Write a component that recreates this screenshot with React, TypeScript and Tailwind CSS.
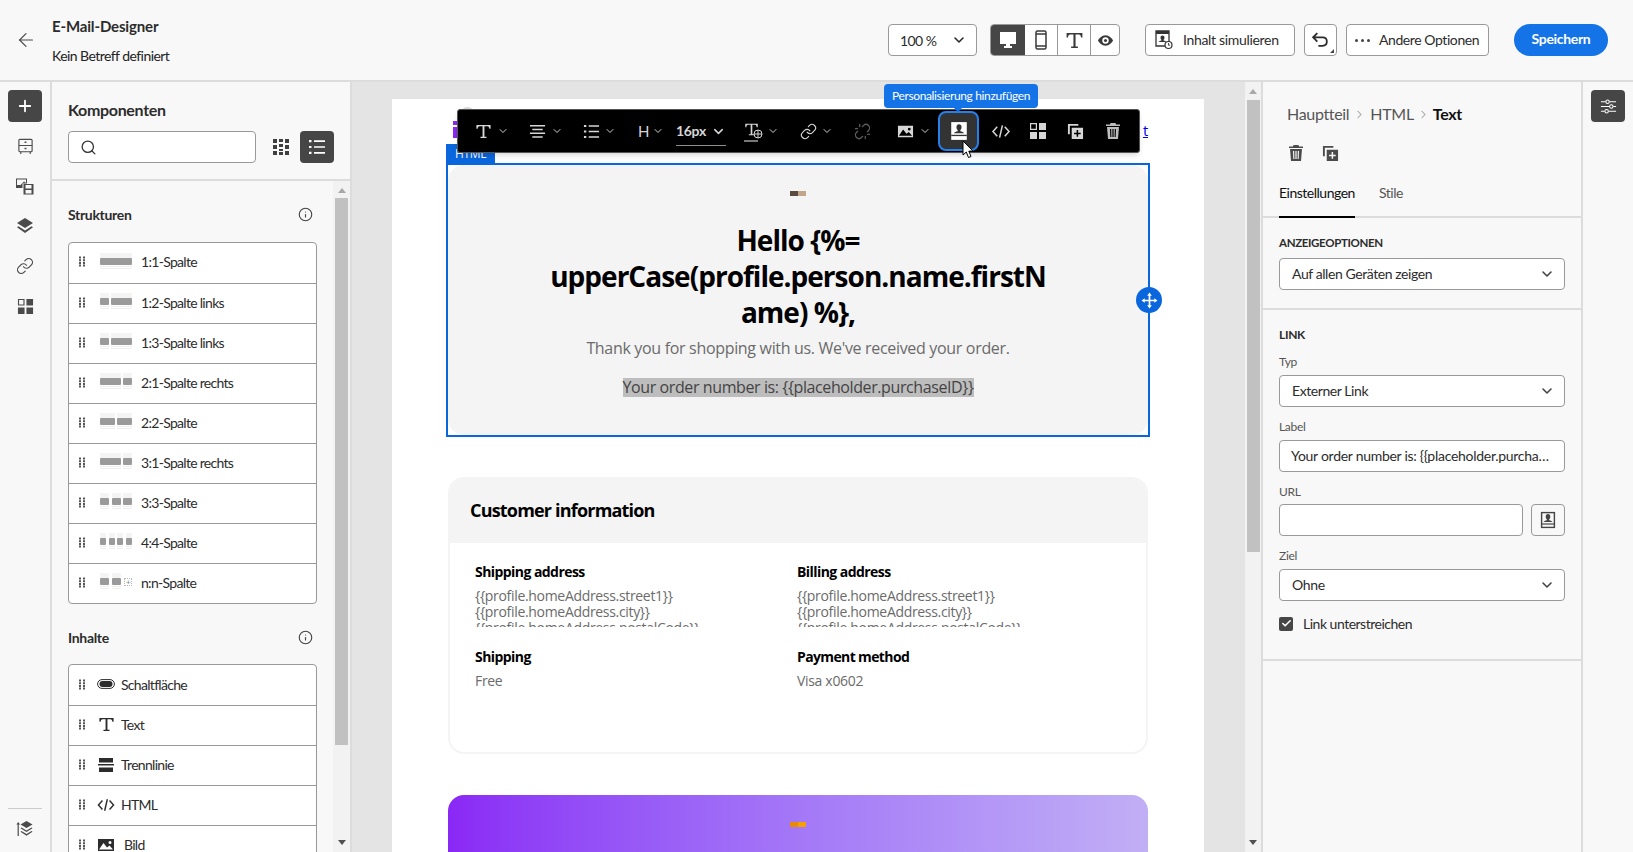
import React from 'react';
import { ArrowLeft, ChevronDown, ChevronRight, Info, Link as LinkIcon, Plus, Search, Unlink, Check } from 'lucide-react';

type IconProps = { className?: string };

const TextIcon = ({ className }: IconProps) => (
  <svg viewBox="0 0 18 18" fill="currentColor" className={className}>
    <path d="M1.500 2h15v4.200h-1.300c-.2-1.700-.8-2.800-2-2.800H10v11.200h2.200V16H5.800v-1.400H8V3.400H4.800c-1.200 0-1.800 1.100-2 2.800H1.500z" />
  </svg>
);

const AlignIcon = ({ className }: IconProps) => (
  <svg viewBox="0 0 18 18" fill="currentColor" className={className}>
    <path d="M1 2h16v1.600H1zM3.500 6h11v1.600h-11zM1 10h16v1.600H1zM3.500 14h11v1.600h-11z" />
  </svg>
);

const ListIcon = ({ className }: IconProps) => (
  <svg viewBox="0 0 18 18" fill="currentColor" className={className}>
    <path d="M1 2h2.500v2.200H1zM6 2.300h11v1.600H6zM1 7.900h2.500v2.200H1zM6 8.200h11v1.600H6zM1 13.800h2.500V16H1zM6 14.100h11v1.600H6z" />
  </svg>
);

const GridDotsIcon = ({ className }: IconProps) => (
  <svg viewBox="0 0 16 16" fill="currentColor" className={className}>
    <path d="M0 0h4v4H0zM6 0h4v3H6zM12 0h4v4h-4zM0 6h4v4H0zM6 5h4v3H6zM12 6h4v4h-4zM0 12h4v4H0zM6 10h4v2H6zM6 13h4v3H6zM12 12h4v4h-4z" />
  </svg>
);

const TilesIcon = ({ className }: IconProps) => (
  <svg viewBox="0 0 18 18" fill="currentColor" className={className}>
    <path d="M1 1h7v7H1zM2.200 2.200v4.600h4.600V2.200z" fillRule="evenodd" />
    <path d="M10 1h7v7h-7zM1 10h7v7H1zM10 10h7v7h-7z" />
  </svg>
);

const DuplicateIcon = ({ className }: IconProps) => (
  <svg viewBox="0 0 18 18" fill="currentColor" className={className}>
    <path d="M1 1h11v2H3v9H1z" />
    <path d="M5 5h12v12H5zM10.200 7.500v2.700H7.500v1.600h2.700v2.700h1.600v-2.700h2.700v-1.600h-2.700V7.500z" fillRule="evenodd" />
  </svg>
);

const TrashIcon = ({ className }: IconProps) => (
  <svg viewBox="0 0 18 18" fill="currentColor" className={className}>
    <path d="M6.500 1h5l.5 1.500h4V4H2V2.500h4zM3 5h12l-1 12H4zM6 7l.3 8h1.100l-.2-8zM8.400 7v8h1.200V7zM10.800 7l-.2 8h1.100l.3-8z" fillRule="evenodd" />
  </svg>
);

const ImageIcon = ({ className }: IconProps) => (
  <svg viewBox="0 0 18 18" fill="currentColor" className={className}>
    <path d="M1 3h16v12H1zM2 13.500h14l-3.500-4-2.500 2-3.500-4.500zM13 5a1.500 1.500 0 100 3 1.500 1.500 0 000-3z" fillRule="evenodd" />
  </svg>
);

const PersonIcon = ({ className, filled }: IconProps & { filled?: boolean }) => (
  <svg viewBox="0 0 18 18" className={className}>
    {filled ? (
      <rect x="2" y="1" width="14" height="16" fill="currentColor" />
    ) : (
      <rect x="2.600" y="1.600" width="12.800" height="14.800" fill="none" stroke="currentColor" strokeWidth="1.400" />
    )}
    <g fill={filled ? '#333' : 'currentColor'}>
      <path d="M9 3c1.500 0 2.300 1.100 2.300 2.700 0 1.100-.4 2-1.100 2.500v1c1.500.4 3 .9 3.300 1.800H4.500c.3-.9 1.800-1.400 3.300-1.800v-1c-.7-.5-1.100-1.400-1.100-2.500C6.700 4.100 7.500 3 9 3z" />
      <path d="M2 12.400h14v1.200H2z" />
    </g>
  </svg>
);

const CodeIcon = ({ className }: IconProps) => (
  <svg viewBox="0 0 20 18" fill="none" stroke="currentColor" strokeWidth="1.600" className={className}>
    <path d="M6 4L1.500 9 6 14M14 4l4.500 5-4.500 5M11.500 2.500l-3 13" />
  </svg>
);

const DragHandle = () => (
  <svg viewBox="0 0 6 10" fill="#555" className="h-[11px] w-[6px] shrink-0">
    <path d="M0 0h2v2H0zM4 0h2v2H4zM0 2.700h2v2H0zM4 2.700h2v2H4zM0 5.400h2v2H0zM4 5.400h2v2H4zM0 8h2v2H0zM4 8h2v2H4z" />
  </svg>
);

// column widths of the little layout previews
const structures: { label: string; cols: number[]; more?: boolean }[] = [
  { label: '1:1-Spalte', cols: [32] },
  { label: '1:2-Spalte links', cols: [9, 21] },
  { label: '1:3-Spalte links', cols: [9, 21] },
  { label: '2:1-Spalte rechts', cols: [21, 9] },
  { label: '2:2-Spalte', cols: [15, 15] },
  { label: '3:1-Spalte rechts', cols: [21, 9] },
  { label: '3:3-Spalte', cols: [9, 9, 9] },
  { label: '4:4-Spalte', cols: [6, 6, 6, 6] },
  { label: 'n:n-Spalte', cols: [9, 9], more: true },
];

function StructureThumb({ cols, more }: { cols: number[]; more?: boolean }) {
  return (
    <div className="flex h-[18px] w-[32px] shrink-0 justify-between gap-[2px]">
      {cols.map((w, i) => (
        <div key={i} className="flex flex-col" style={{ width: w }}>
          <div className="h-[5px] bg-[#f4f4f4]" />
          <div className="h-[7px] rounded-[1px] bg-[#9a9a9a]" />
          <div className="mt-[1px] h-[1px] bg-[#eeeeee]" />
          <div className="mt-[1px] h-[1px] bg-[#eeeeee]" />
        </div>
      ))}
      {more && (
        <div className="mt-[5px] flex h-[8px] w-[8px] items-center justify-center border border-dotted border-[#bbbbbb] text-[8px] leading-none text-[#888888]">
          +
        </div>
      )}
    </div>
  );
}

const contents: { label: string; icon: React.ReactNode; gap: string }[] = [
  {
    label: 'Schaltfläche',
    gap: 'ml-[6px]',
    icon: (
      <svg viewBox="0 0 18 10" className="h-[10px] w-[18px]">
        <rect x=".6" y=".6" width="16.800" height="8.800" rx="4.400" fill="none" stroke="#2c2c2c" strokeWidth="1" />
        <rect x="2.500" y="2" width="13" height="6" rx="3" fill="#2c2c2c" />
      </svg>
    ),
  },
  { label: 'Text', gap: 'ml-[6px]', icon: <TextIcon className="h-[17px] w-[17px] text-[#2c2c2c]" /> },
  {
    label: 'Trennlinie',
    gap: 'ml-[6px]',
    icon: (
      <svg viewBox="0 0 16 14" fill="#2c2c2c" className="h-[14px] w-[16px]">
        <path d="M1 0h14v4.500H1zM0 6h16v1.600H0zM1 9.500h14V14H1z" />
      </svg>
    ),
  },
  { label: 'HTML', gap: 'ml-[6px]', icon: <CodeIcon className="h-[16px] w-[18px] text-[#2c2c2c]" /> },
  { label: 'Bild', gap: 'ml-[9px]', icon: <ImageIcon className="h-[18px] w-[18px] text-[#2c2c2c]" /> },
];

function Header() {
  return (
    <header className="flex h-[82px] shrink-0 items-center border-b-2 border-[#dcdcdc] bg-[#f8f8f8] pr-[25px]">
      <ArrowLeft className="ml-[15px] h-[22px] w-[22px] text-[#4b4b4b]" strokeWidth={1.300} />
      <div className="ml-[15px] flex flex-col pt-[2px]">
        <span className="text-[15px] leading-[20px] font-bold tracking-[-0.01em] text-[#2c2c2c]">E-Mail-Designer</span>
        <span className="mt-[10px] text-[14px] leading-[20px] tracking-[-0.04em] text-[#222222]">Kein Betreff definiert</span>
      </div>

      <div className="ml-auto flex h-[32px] w-[89px] items-center justify-between rounded-[4px] border border-[#999999] bg-white pr-[9px] pl-[11px] text-[14px] tracking-[-0.04em] text-[#2c2c2c]">
        100 %
        <ChevronDown className="h-[16px] w-[16px]" strokeWidth={2.400} />
      </div>

      <div className="ml-[13px] flex h-[32px] w-[130px] rounded-[4px] border border-[#999999] bg-white text-[#3a3a3a]">
        <div className="flex w-[34px] items-center justify-center rounded-l-[3px] bg-[#464646] text-white">
          <svg viewBox="0 0 18 18" fill="currentColor" className="h-[18px] w-[18px]">
            <path d="M1 1h16v12h-6v2h2v2H5v-2h2v-2H1z" />
          </svg>
        </div>
        <div className="flex w-[33px] items-center justify-center border-r border-[#999999]">
          <svg viewBox="0 0 12 20" fill="none" stroke="currentColor" strokeWidth="1.500" className="h-[20px] w-[12px]">
            <rect x="1" y="1" width="10" height="18" rx="1.500" />
            <path d="M1 4h10M1 16h10" />
          </svg>
        </div>
        <div className="flex w-[33px] items-center justify-center border-r border-[#999999]">
          <TextIcon className="h-[19px] w-[19px]" />
        </div>
        <div className="flex flex-1 items-center justify-center">
          <svg viewBox="0 0 18 18" className="h-[17px] w-[17px]">
            <path d="M9 3.500c4 0 7 3.500 8 5.500-1 2-4 5.500-8 5.500S2 11 1 9c1-2 4-5.500 8-5.500z" fill="currentColor" />
            <circle cx="9" cy="9" r="3.400" fill="white" />
            <circle cx="9" cy="9" r="1.600" fill="currentColor" />
          </svg>
        </div>
      </div>

      <div className="ml-[25px] flex h-[32px] w-[150px] items-center rounded-[4px] border border-[#999999] bg-white pl-[9px] text-[14px] text-[#2c2c2c]">
        <svg viewBox="0 0 18 20" className="h-[20px] w-[18px] text-[#333333]">
          <path d="M1 1h13v15H1z" fill="none" stroke="currentColor" strokeWidth="1.300" />
          <path d="M1 1h13v3H1z" fill="currentColor" />
          <path d="M7.500 5.500c1.200 0 2 .9 2 2.200 0 .9-.3 1.600-.9 2v.9c1.200.3 2.400.7 2.700 1.400H3.700c.3-.7 1.500-1.100 2.700-1.400v-.9c-.6-.4-.9-1.100-.9-2 0-1.300.8-2.200 2-2.200z" fill="currentColor" />
          <circle cx="13.500" cy="15" r="3.500" fill="white" stroke="currentColor" strokeWidth="1.200" />
          <path d="M13.500 13v2.200h1.600" fill="none" stroke="currentColor" strokeWidth=".9" />
        </svg>
        <span className="ml-[10px] pb-[1px]">Inhalt simulieren</span>
      </div>
      <div className="relative ml-[9px] flex h-[32px] w-[33px] items-center justify-center rounded-[4px] border border-[#999999] bg-white text-[#2c2c2c]">
        <svg viewBox="0 0 18 18" fill="none" stroke="currentColor" strokeWidth="1.700" className="h-[19px] w-[19px]">
          <path d="M6 2L2 6l4 4M2.500 6H11c2.500 0 4 1.700 4 4s-1.500 4-4 4H7" />
        </svg>
        <svg viewBox="0 0 4 4" fill="#444" className="absolute right-[2px] bottom-[2px] h-[4px] w-[4px]">
          <path d="M4 0v4H0z" />
        </svg>
      </div>
      <div className="ml-[9px] flex h-[32px] w-[143px] items-center rounded-[4px] border border-[#999999] bg-white pl-[8px] text-[14px] tracking-[-0.03em] text-[#2c2c2c]">
        <span className="flex gap-[3px]">
          <i className="h-[3px] w-[3px] rounded-full bg-[#444444]" />
          <i className="h-[3px] w-[3px] rounded-full bg-[#444444]" />
          <i className="h-[3px] w-[3px] rounded-full bg-[#444444]" />
        </span>
        <span className="ml-[9px] pb-[1px]">Andere Optionen</span>
      </div>
      <button className="ml-[25px] h-[32px] w-[94px] rounded-[16px] bg-[#1473e6] pb-[3px] text-[14px] font-bold text-white">Speichern</button>
    </header>
  );
}

function LeftRail() {
  return (
    <aside className="flex w-[52px] shrink-0 flex-col items-center border-r-2 border-[#dcdcdc] bg-[#f8f8f8] pt-[8px]">
      <div className="flex h-[32px] w-[34px] items-center justify-center rounded-[4px] bg-[#464646] text-white">
        <Plus className="h-[18px] w-[18px]" strokeWidth={2.400} />
      </div>
      <div className="mt-[4px] flex flex-col items-center text-[#4b4b4b]">
        <div className="flex h-[40px] items-center">
          <svg viewBox="0 0 18 18" fill="none" stroke="currentColor" strokeWidth="1.200" className="h-[17px] w-[17px]">
            <rect x="2" y="1.500" width="14" height="13" rx="1" />
            <path d="M2 8h14M4 14.500V17M14 14.500V17" />
            <path d="M8 4.500h2M8 11h2" strokeWidth="1.600" />
          </svg>
        </div>
        <div className="flex h-[40px] items-center">
          <svg viewBox="0 0 18 18" className="h-[18px] w-[18px]">
            <path d="M0 1.500h11V11H0z" fill="currentColor" />
            <path d="M1 2.500h9v3.500L8 4.500 4.500 8 1 8z" fill="#f8f8f8" />
            <path d="M6.500 6.500H18V18H6.500z" fill="#f8f8f8" />
            <path d="M7.500 7h10v10.500h-10z" fill="currentColor" />
            <path d="M9.500 8h6v3.500h-6zM9.500 13h6v3.500h-6z" fill="#f8f8f8" />
          </svg>
        </div>
        <div className="flex h-[40px] items-center">
          <svg viewBox="0 0 18 18" fill="currentColor" className="h-[18px] w-[18px]">
            <path d="M9 1l8 5-8 5-8-5zM2.500 9.300L9 13.400l6.500-4.100L17 10.300l-8 5.700-8-5.700z" />
          </svg>
        </div>
        <div className="flex h-[40px] items-center">
          <LinkIcon className="h-[18px] w-[18px]" strokeWidth={1.600} />
        </div>
        <div className="flex h-[40px] items-center">
          <TilesIcon className="h-[17px] w-[17px]" />
        </div>
      </div>
      <div className="mt-auto mb-[14px] flex w-[34px] flex-col items-center border-t border-[#cccccc] pt-[11px] text-[#4b4b4b]">
        <svg viewBox="0 0 18 18" fill="currentColor" className="h-[18px] w-[18px]">
          <path d="M2.200 2L4 4.500H2.800V16H1.600V4.500H.4zM10.500 1l6 3.500-6 3.500-6-3.500z" />
          <path d="M5.500 7.500l5 3 5-3 1 .7-6 3.800-6-3.800zM5.500 11l5 3 5-3 1 .7-6 4-6-4z" />
        </svg>
      </div>
    </aside>
  );
}

function ComponentsPanel() {
  return (
    <aside className="flex w-[300px] shrink-0 flex-col border-r-2 border-[#dcdcdc] bg-[#f8f8f8]">
      <div className="h-[99px] shrink-0 border-b-2 border-[#dcdcdc] px-[16px] pt-[17px]">
        <h2 className="text-[16px] leading-[22px] font-bold text-[#2c2c2c]">Komponenten</h2>
        <div className="mt-[10px] flex items-center">
          <div className="flex h-[32px] w-[188px] items-center rounded-[4px] border border-[#999999] bg-white pl-[11px]">
            <Search className="h-[17px] w-[17px] text-[#333333]" strokeWidth={1.800} />
          </div>
          <GridDotsIcon className="ml-[17px] h-[16px] w-[16px] text-[#3f3f3f]" />
          <div className="ml-[11px] flex h-[32px] w-[34px] items-center justify-center rounded-[4px] bg-[#464646] text-white">
            <ListIcon className="h-[18px] w-[18px]" />
          </div>
        </div>
      </div>

      <div className="flex min-h-0 flex-1">
        <div className="w-[281px] shrink-0 overflow-hidden pl-[16px]">
          <div className="mt-[23px] flex h-[20px] w-[249px] items-center justify-between text-[14px] font-bold text-[#2c2c2c]">
            Strukturen
            <Info className="mr-[4px] h-[15px] w-[15px] text-[#444444]" strokeWidth={1.800} />
          </div>
          <div className="mt-[18px] w-[249px] rounded-[4px] border border-[#999999] bg-white">
            {structures.map((s, i) => (
              <div key={s.label} className={`flex h-[40px] items-center pb-[3px] pl-[10px] text-[14px] tracking-[-0.05em] text-[#2c2c2c] ${i ? 'border-t border-[#999999]' : ''}`}>
                <DragHandle />
                <div className="ml-[15px]">
                  <StructureThumb cols={s.cols} more={s.more} />
                </div>
                <span className="ml-[9px]">{s.label}</span>
              </div>
            ))}
          </div>
          <div className="mt-[23px] flex h-[20px] w-[249px] items-center justify-between text-[14px] font-bold text-[#2c2c2c]">
            Inhalte
            <Info className="mr-[4px] h-[15px] w-[15px] text-[#444444]" strokeWidth={1.800} />
          </div>
          <div className="mt-[17px] w-[249px] rounded-t-[4px] border border-[#999999] bg-white">
            {contents.map((c, i) => (
              <div key={c.label} className={`flex h-[40px] items-center pb-[2px] pl-[10px] text-[14px] tracking-[-0.05em] text-[#2c2c2c] ${i ? 'border-t border-[#999999]' : ''}`}>
                <DragHandle />
                <div className="ml-[12px] flex w-[18px] justify-center">{c.icon}</div>
                <span className={c.gap}>{c.label}</span>
              </div>
            ))}
          </div>
        </div>
        <Scrollbar thumb="mt-[5px] h-[547px]" width="w-[17px]" />
      </div>
    </aside>
  );
}

function Scrollbar({ thumb, width }: { thumb: string; width: string }) {
  return (
    <div className={`flex shrink-0 flex-col items-center bg-[#f2f2f2] ${width}`}>
      <div className="mt-[7px] h-0 w-0 border-x-[4px] border-b-[5px] border-x-transparent border-b-[#a8a8a8]" />
      <div className={`w-[13px] bg-[#c1c1c1] ${thumb}`} />
      <div className="mt-auto mb-[7px] h-0 w-0 border-x-[4px] border-t-[5px] border-x-transparent border-t-[#505050]" />
    </div>
  );
}

const ToolChevron = ({ className }: IconProps) => (
  <ChevronDown className={`h-[12px] w-[12px] text-[#d0d0d0] ${className ?? ''}`} strokeWidth={2} />
);

function Toolbar() {
  return (
    <div className="absolute top-[27px] left-[105px] z-20 flex h-[44px] w-[683px] items-center rounded-[3px] border border-[#555555] bg-black pl-[17px] text-[#d6d6d6] shadow-md">
      <TextIcon className="h-[17px] w-[17px]" />
      <ToolChevron className="ml-[5px]" />
      <AlignIcon className="ml-[20px] h-[17px] w-[17px]" />
      <ToolChevron className="ml-[5px]" />
      <ListIcon className="ml-[20px] h-[17px] w-[17px]" />
      <ToolChevron className="ml-[4px]" />
      <span className="ml-[22px] w-[11px] text-[15px] leading-none">H</span>
      <ToolChevron className="ml-[3px]" />
      <div className="relative ml-[12px] flex w-[50px] items-center justify-between">
        <span className="text-[14px] leading-none font-bold">16px</span>
        <ChevronDown className="h-[15px] w-[15px]" strokeWidth={2.400} />
        <span className="absolute top-[21px] h-[1px] w-full bg-[#8f8f8f]" />
      </div>
      <div className="relative ml-[18px] h-[18px] w-[18px]">
        <TextIcon className="h-[15px] w-[15px]" />
        <svg viewBox="0 0 10 10" fill="none" stroke="currentColor" strokeWidth="1" className="absolute -right-[1px] bottom-[1px] h-[10px] w-[10px]">
          <circle cx="5" cy="5" r="4" fill="#000" />
          <path d="M1 5h8M5 1v8" />
        </svg>
        <span className="absolute -bottom-[2px] left-0 h-[2px] w-[14px] bg-[#777777]" />
      </div>
      <ToolChevron className="ml-[5px]" />
      <LinkIcon className="ml-[21px] h-[17px] w-[17px]" strokeWidth={1.600} />
      <ToolChevron className="ml-[4px]" />
      <Unlink className="ml-[21px] h-[17px] w-[17px] text-[#5c5c5c]" strokeWidth={1.800} />
      <ImageIcon className="ml-[26px] h-[17px] w-[17px]" />
      <ToolChevron className="ml-[5px]" />
      <div className="ml-[7px] flex h-[40px] w-[41px] items-center justify-center rounded-[8px] border-2 border-[#2680eb] bg-[#333333]">
        <PersonIcon className="h-[20px] w-[20px] text-white" filled />
      </div>
      <CodeIcon className="ml-[12px] h-[17px] w-[20px]" />
      <TilesIcon className="ml-[18px] h-[18px] w-[18px]" />
      <DuplicateIcon className="ml-[20px] h-[17px] w-[17px]" />
      <TrashIcon className="ml-[20px] h-[18px] w-[18px] text-[#bdbdbd]" />

      {/* tooltip over the personalisation button */}
      <div className="absolute -top-[26px] left-[426px] flex h-[24px] w-[154px] items-center justify-center rounded-[4px] bg-[#1473e6] text-[12px] tracking-[-0.03em] text-white">
        Personalisierung hinzufügen
        <span className="absolute top-[24px] left-[70px] h-0 w-0 border-x-[4px] border-t-[4px] border-x-transparent border-t-[#1473e6]" />
      </div>
      {/* mouse cursor */}
      <svg viewBox="0 0 12 19" className="absolute top-[30px] left-[504px] z-10 h-[19px] w-[12px]">
        <path d="M1 1v14l3.300-3 2.200 5.500 2.500-1-2.200-5.400H11z" fill="white" stroke="black" strokeWidth="1" />
      </svg>
    </div>
  );
}

function EmailBody() {
  const mail = "font-['Open_Sans','Noto_Sans',sans-serif]";
  return (
    <div className={`w-[812px] bg-white ${mail} tracking-[-0.02em]`}>
      {/* logo row, mostly behind the toolbar */}
      <div className="relative flex h-[64px] items-end justify-between pr-[56px] pb-[25px] pl-[61px]">
        <span className="absolute top-[8px] left-[68px] h-[15px] w-[15px] rounded-full bg-[#d8d8d8]" />
        <svg viewBox="0 0 5 17" fill="#8a27f5" className="h-[17px] w-[5px]">
          <path d="M0 0h5v4H0zM0 6h5v11H0z" />
        </svg>
        <a className="text-[15px] leading-[16px] text-[#0000ee] underline">t</a>
      </div>

      <div className="relative ml-[54px] h-[274px] w-[704px] border-2 border-[#0a66dd]">
        <div className="absolute -top-[21px] -left-[2px] h-[19px] w-[49px] bg-[#0a66dd] text-center text-[12px] leading-[19px] text-white">HTML</div>
        <div className="flex h-full flex-col items-center rounded-[16px] bg-[#f4f4f4]">
          <div className="mt-[26px] flex h-[5px] w-[16px]">
            <i className="w-1/2 bg-[#5a4a40]" />
            <i className="w-1/2 bg-[#c2a68c]" />
          </div>
          <h1 className="mt-[26px] text-center text-[28px] leading-[36px] font-bold tracking-[-0.035em] text-black">
            Hello {'{%='}
            <br />
            upperCase(profile.person.name.firstN
            <br />
            ame) %{'}'},
          </h1>
          <p className="mt-[6px] text-[16px] leading-[24px] text-[#6b6b6b]">Thank you for shopping with us. We've received your order.</p>
          <p className="mt-[18px] bg-[#bdbdbd] text-[16px] leading-[19px] tracking-[-0.025em] text-[#444444]">Your order number is: {'{{placeholder.purchaseID}}'}</p>
        </div>
        <div className="absolute top-[122px] -right-[14px] flex h-[26px] w-[26px] items-center justify-center rounded-full bg-[#0a66dd] text-white">
          <svg viewBox="0 0 16 16" fill="white" className="h-[17px] w-[17px]">
            <path d="M7.200 3.500H5.800L8 .5l2.200 3H8.800v3.700h3.700V5.800l3 2.200-3 2.200V8.800H8.800v3.700h1.400L8 15.500l-2.200-3h1.400V8.800H3.500v1.400L.5 8l3-2.200v1.400h3.700z" />
          </svg>
        </div>
      </div>

      <div className="mt-[40px] ml-[56px] h-[277px] w-[700px] overflow-hidden rounded-[16px] border-2 border-[#f4f4f4]">
        <div className="flex h-[64px] items-center bg-[#f4f4f4] pb-[2px] pl-[20px] text-[18px] font-bold tracking-[-0.045em] text-black">Customer information</div>
        <div className="grid grid-cols-[322px_1fr] pt-[19px] pl-[25px]">
          {['Shipping address', 'Billing address'].map((t) => (
            <div key={t}>
              <h3 className="text-[14px] leading-[20px] font-bold tracking-[-0.04em] text-black">{t}</h3>
              <div className="mt-[6px] h-[39px] overflow-hidden text-[14px] leading-[16px] text-[#6b6b6b]">
                {'{{profile.homeAddress.street1}}'}
                <br />
                {'{{profile.homeAddress.city}}'}
                <br />
                {'{{profile.homeAddress.postalCode}}'}
              </div>
            </div>
          ))}
          <div className="mt-[20px]">
            <h3 className="text-[14px] leading-[20px] font-bold tracking-[-0.04em] text-black">Shipping</h3>
            <p className="mt-[4px] text-[14px] leading-[20px] text-[#6b6b6b]">Free</p>
          </div>
          <div className="mt-[20px]">
            <h3 className="text-[14px] leading-[20px] font-bold tracking-[-0.045em] text-black">Payment method</h3>
            <p className="mt-[4px] text-[14px] leading-[20px] text-[#6b6b6b]">Visa x0602</p>
          </div>
        </div>
      </div>

      <div className="mt-[41px] ml-[56px] flex h-[200px] w-[700px] justify-center rounded-t-[16px] bg-gradient-to-r from-[#8a27f5] to-[#c1aff5] pt-[27px]">
        <div className="flex h-[5px] w-[16px]">
          <i className="w-1/2 bg-[#e8890c]" />
          <i className="w-1/2 bg-[#f5a000]" />
        </div>
      </div>
    </div>
  );
}

function Field({ label, className, children }: { label: string; className?: string; children: React.ReactNode }) {
  return (
    <div className={className}>
      <div className="text-[12px] leading-[16px] text-[#555555]">{label}</div>
      {children}
    </div>
  );
}

function SelectBox({ value, className }: { value: string; className?: string }) {
  return (
    <div className={`flex h-[32px] w-[286px] items-center justify-between rounded-[4px] border border-[#999999] bg-white pr-[9px] pl-[12px] text-[14px] text-[#2c2c2c] ${className ?? ''}`}>
      <span className="pb-[2px]">{value}</span>
      <ChevronDown className="h-[16px] w-[16px] text-[#444444]" strokeWidth={2.400} />
    </div>
  );
}

function PropertiesPanel() {
  return (
    <aside className="flex w-[322px] shrink-0 flex-col border-x-2 border-[#dcdcdc] bg-[#f8f8f8]">
      <div className="flex items-center pt-[22px] pl-[24px] text-[16px] leading-[20px] text-[#555555]">
        Hauptteil
        <ChevronRight className="mx-[4px] h-[13px] w-[13px] text-[#888888]" strokeWidth={1.800} />
        HTML
        <ChevronRight className="mx-[3px] h-[13px] w-[13px] text-[#888888]" strokeWidth={1.800} />
        <b className="text-[#111111]">Text</b>
      </div>
      <div className="mt-[20px] flex items-center gap-[17px] pl-[24px] text-[#4b4b4b]">
        <TrashIcon className="h-[18px] w-[18px]" />
        <DuplicateIcon className="h-[17px] w-[17px]" />
      </div>
      <div className="mt-[18px] flex h-[38px] border-b-2 border-[#dcdcdc] pl-[16px] text-[14px] tracking-[-0.035em]">
        <div className="-mb-[2px] h-[38px] w-[76px] border-b-2 border-black pt-[2px] text-[#111111]">Einstellungen</div>
        <div className="ml-[24px] pt-[2px] text-[#555555]">Stile</div>
      </div>

      <div className="h-[92px] border-b-2 border-[#dcdcdc] px-[16px] pt-[17px]">
        <div className="text-[11.500px] leading-[16px] font-bold tracking-[-0.03em] text-[#2c2c2c]">ANZEIGEOPTIONEN</div>
        <SelectBox value="Auf allen Geräten zeigen" className="mt-[7px] tracking-[-0.03em]" />
      </div>

      <div className="h-[351px] border-b-2 border-[#dcdcdc] px-[16px] pt-[17px]">
        <div className="text-[12px] leading-[16px] font-bold text-[#2c2c2c]">LINK</div>
        <Field label="Typ" className="mt-[11px]">
          <SelectBox value="Externer Link" className="mt-[5px] tracking-[-0.03em]" />
        </Field>
        <Field label="Label" className="mt-[12px]">
          <div className="mt-[5px] flex h-[32px] w-[286px] items-center rounded-[4px] border border-[#999999] bg-white px-[11px] text-[14px] tracking-[-0.02em] text-[#2c2c2c]">
            <span className="truncate pb-[2px]">Your order number is: {'{{placeholder.purchaseID}}'}</span>
          </div>
        </Field>
        <Field label="URL" className="mt-[12px]">
          <div className="mt-[4px] flex gap-[8px]">
            <div className="h-[32px] w-[244px] rounded-[4px] border border-[#999999] bg-white" />
            <div className="flex h-[32px] w-[34px] items-center justify-center rounded-[4px] border border-[#999999] text-[#444444]">
              <PersonIcon className="h-[18px] w-[18px]" />
            </div>
          </div>
        </Field>
        <Field label="Ziel" className="mt-[12px]">
          <SelectBox value="Ohne" className="mt-[5px]" />
        </Field>
        <div className="mt-[12px] flex items-center text-[14px] tracking-[-0.035em] text-[#2c2c2c]">
          <span className="flex h-[14px] w-[14px] items-center justify-center rounded-[2px] bg-[#464646]">
            <Check className="h-[11px] w-[11px] text-white" strokeWidth={3.500} />
          </span>
          <span className="ml-[10px]">Link unterstreichen</span>
        </div>
      </div>
    </aside>
  );
}

export default function App() {
  return (
    <div className="flex h-[852px] w-[1633px] flex-col overflow-hidden bg-[#f8f8f8] font-['Lato','Noto_Sans',sans-serif] tracking-[-0.02em]">
      <Header />
      <div className="flex min-h-0 flex-1">
        <LeftRail />
        <ComponentsPanel />
        <main className="relative flex min-w-0 flex-1 overflow-hidden bg-[#e4e4e4]">
          <div className="w-[893px] shrink-0 overflow-hidden pt-[17px] pl-[40px]">
            <EmailBody />
          </div>
          <Toolbar />
          <Scrollbar thumb="mt-[6px] h-[452px]" width="w-[16px]" />
        </main>
        <PropertiesPanel />
        <aside className="flex w-[50px] shrink-0 justify-center pt-[8px]">
          <div className="flex h-[32px] w-[34px] items-center justify-center rounded-[4px] bg-[#464646] text-white">
            <svg viewBox="0 0 18 18" fill="none" stroke="currentColor" strokeWidth="1.100" className="h-[17px] w-[17px]">
              <path d="M1 4h5M10 4h7M1 9h9M14 9h3M1 14h4M9 14h8" />
              <circle cx="8" cy="4" r="1.800" />
              <circle cx="12" cy="9" r="1.800" />
              <circle cx="7" cy="14" r="1.800" />
            </svg>
          </div>
        </aside>
      </div>
    </div>
  );
}
